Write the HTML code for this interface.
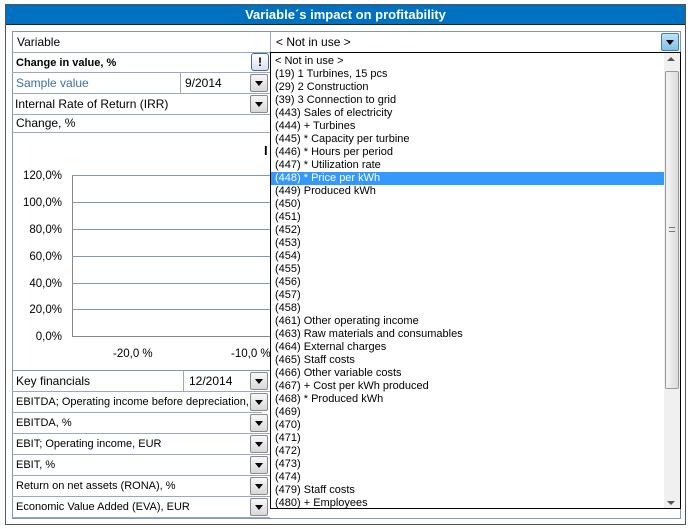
<!DOCTYPE html>
<html><head><style>
*{box-sizing:border-box;margin:0;padding:0}
body{width:692px;height:529px;background:#fff;font-family:"Liberation Sans",sans-serif;font-size:11px;color:#000;position:relative;overflow:hidden}
.a{position:absolute}
.row{position:absolute;left:12px;width:258px;border-bottom:1px solid #9aa9bb;white-space:nowrap;overflow:hidden;padding-left:4px;line-height:20px}
.btn{position:absolute;width:18px;height:18px;border:1px solid #8a8a8a;border-radius:2px;background:linear-gradient(#f8f8f8,#d8d8d8)}
.btn:after{content:"";position:absolute;left:4px;top:6px;border-left:4px solid transparent;border-right:4px solid transparent;border-top:5px solid #000}
.it{height:13px;line-height:13px;padding-left:4px;white-space:nowrap}
.gl{position:absolute;left:72px;width:198px;height:1px;background:#7f98b2}
.yl{position:absolute;left:10px;width:52px;text-align:right;font-size:11.5px;line-height:12px}
</style></head><body>
<div class="a" style="left:5px;top:4px;width:681px;height:521px;border:1px solid #555"></div>
<div class="a" style="left:6px;top:5px;width:679px;height:20px;background:#0070c0;border-bottom:1px solid #222;color:#fff;font-weight:bold;font-size:13px;text-align:center;line-height:20px">Variable´s impact on profitability</div>
<div class="a" style="left:12px;top:31px;width:669px;height:488px;border:1px solid #7f98b2"></div>
<div class="row" style="top:32px;height:21px;padding-left:5px;font-size:12px">Variable</div>
<div class="a" style="left:270px;top:32px;width:411px;height:21px;border-left:1px solid #9aa9bb;border-bottom:1px solid #000;padding-left:5px;line-height:21px;font-size:12px">&lt; Not in use &gt;</div>
<div class="btn" style="left:661px;top:33px;background:linear-gradient(#bfe3f7,#7fc0e6);border-color:#3c7fb1"></div>
<div class="row" style="top:53px;height:20px;font-weight:bold">Change in value, %</div>
<div class="a" style="left:251px;top:53px;width:18px;height:18px;border:1px solid #3c6fa0;border-radius:3px;background:linear-gradient(#fff,#dde);text-align:center;font-weight:bold;line-height:16px;font-size:12px">!</div>
<div class="row" style="top:73px;height:21px;color:#3c6fa8;font-size:12px">Sample value</div>
<div class="a" style="left:180px;top:73px;width:70px;height:21px;border-left:1px solid #9aa9bb;padding-left:4px;line-height:20px;font-size:12px">9/2014</div>
<div class="btn" style="left:250px;top:74px"></div>
<div class="row" style="top:94px;height:21px;font-size:12px;padding-left:3px">Internal Rate of Return (IRR)</div>
<div class="btn" style="left:250px;top:95px"></div>
<div class="row" style="top:115px;height:18px;line-height:17px;font-size:12px">Change, %</div>
<div class="a" style="left:264px;top:143px;font-weight:bold;font-size:13px">I</div>
<div class="a" style="left:72px;top:175px;width:1px;height:162px;background:#888"></div>
<div class="gl" style="top:175px"></div><div class="gl" style="top:202px"></div><div class="gl" style="top:229px"></div><div class="gl" style="top:256px"></div><div class="gl" style="top:283px"></div><div class="gl" style="top:309px"></div><div class="gl" style="top:336px;background:#888"></div>
<div class="yl" style="top:170px">120,0%</div><div class="yl" style="top:197px">100,0%</div><div class="yl" style="top:224px">80,0%</div><div class="yl" style="top:251px">60,0%</div><div class="yl" style="top:278px">40,0%</div><div class="yl" style="top:304px">20,0%</div><div class="yl" style="top:331px">0,0%</div>
<div class="a" style="left:113px;top:348px;font-size:11.5px">-20,0 %</div>
<div class="a" style="left:231px;top:348px;font-size:11.5px">-10,0 %</div>
<div class="a" style="left:12px;top:370px;width:258px;height:1px;background:#7f98b2"></div>
<div class="row" style="top:371px;height:21px;font-size:12px">Key financials</div>
<div class="a" style="left:183px;top:371px;width:67px;height:21px;border-left:1px solid #9aa9bb;padding-left:5px;line-height:20px;font-size:12px">12/2014</div>
<div class="btn" style="left:250px;top:372px"></div>
<div class="row" style="top:392px;height:21px;width:250px">EBITDA; Operating income before depreciation, EUR</div><div class="btn" style="left:250px;top:393px"></div>
<div class="row" style="top:413px;height:21px">EBITDA, %</div><div class="btn" style="left:250px;top:414px"></div>
<div class="row" style="top:434px;height:21px">EBIT; Operating income, EUR</div><div class="btn" style="left:250px;top:435px"></div>
<div class="row" style="top:455px;height:21px">EBIT, %</div><div class="btn" style="left:250px;top:456px"></div>
<div class="row" style="top:476px;height:21px">Return on net assets (RONA), %</div><div class="btn" style="left:250px;top:477px"></div>
<div class="row" style="top:497px;height:21px">Economic Value Added (EVA), EUR</div><div class="btn" style="left:250px;top:498px"></div>
<div class="a" style="left:270px;top:52px;width:411px;height:457px;border:1px solid #000;background:#fff;padding-top:2px;overflow:hidden">
<div class="it">&lt; Not in use &gt;</div><div class="it">(19) 1 Turbines, 15 pcs</div><div class="it">(29) 2 Construction</div><div class="it">(39) 3 Connection to grid</div><div class="it">(443) Sales of electricity</div><div class="it">(444) + Turbines</div><div class="it">(445) * Capacity per turbine</div><div class="it">(446) * Hours per period</div><div class="it">(447) * Utilization rate</div><div class="it" style="background:#3399ff;color:#fff;width:393px">(448) * Price per kWh</div><div class="it">(449) Produced kWh</div><div class="it">(450)</div><div class="it">(451)</div><div class="it">(452)</div><div class="it">(453)</div><div class="it">(454)</div><div class="it">(455)</div><div class="it">(456)</div><div class="it">(457)</div><div class="it">(458)</div><div class="it">(461) Other operating income</div><div class="it">(463) Raw materials and consumables</div><div class="it">(464) External charges</div><div class="it">(465) Staff costs</div><div class="it">(466) Other variable costs</div><div class="it">(467) + Cost per kWh produced</div><div class="it">(468) * Produced kWh</div><div class="it">(469)</div><div class="it">(470)</div><div class="it">(471)</div><div class="it">(472)</div><div class="it">(473)</div><div class="it">(474)</div><div class="it">(479) Staff costs</div><div class="it">(480) + Employees</div>
<div class="a" style="left:393px;top:0;width:16px;height:455px;background:#f0f0f0"></div>
<div class="a" style="left:396px;top:4px;width:0;height:0;border-left:4px solid transparent;border-right:4px solid transparent;border-bottom:4px solid #555"></div>
<div class="a" style="left:396px;top:448px;width:0;height:0;border-left:4px solid transparent;border-right:4px solid transparent;border-top:4px solid #555"></div>
<div class="a" style="left:394px;top:18px;width:14px;height:318px;border:1px solid #999;border-radius:2px;background:linear-gradient(90deg,#f4f4f4,#dcdcdc)"></div>
<div class="a" style="left:398px;top:174px;width:6px;height:5px;border-top:1px solid #777;border-bottom:1px solid #777"></div>
</div>
</body></html>
